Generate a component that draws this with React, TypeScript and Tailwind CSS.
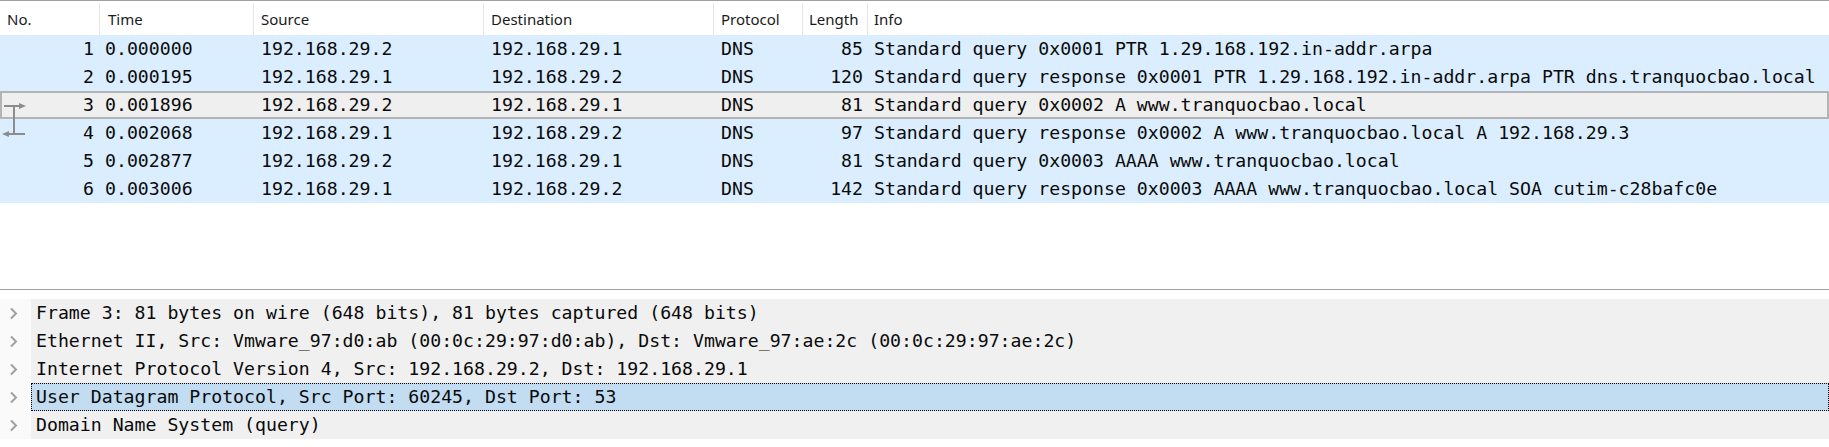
import React from "react";

const mono = "font-['DejaVu_Sans_Mono','Liberation_Mono',monospace] text-[18.2px]";

type Pkt = { no: number; time: string; src: string; dst: string; proto: string; len: number; info: string };

const packets: Pkt[] = [
  { no: 1, time: "0.000000", src: "192.168.29.2", dst: "192.168.29.1", proto: "DNS", len: 85, info: "Standard query 0x0001 PTR 1.29.168.192.in-addr.arpa" },
  { no: 2, time: "0.000195", src: "192.168.29.1", dst: "192.168.29.2", proto: "DNS", len: 120, info: "Standard query response 0x0001 PTR 1.29.168.192.in-addr.arpa PTR dns.tranquocbao.local" },
  { no: 3, time: "0.001896", src: "192.168.29.2", dst: "192.168.29.1", proto: "DNS", len: 81, info: "Standard query 0x0002 A www.tranquocbao.local" },
  { no: 4, time: "0.002068", src: "192.168.29.1", dst: "192.168.29.2", proto: "DNS", len: 97, info: "Standard query response 0x0002 A www.tranquocbao.local A 192.168.29.3" },
  { no: 5, time: "0.002877", src: "192.168.29.2", dst: "192.168.29.1", proto: "DNS", len: 81, info: "Standard query 0x0003 AAAA www.tranquocbao.local" },
  { no: 6, time: "0.003006", src: "192.168.29.1", dst: "192.168.29.2", proto: "DNS", len: 142, info: "Standard query response 0x0003 AAAA www.tranquocbao.local SOA cutim-c28bafc0e" },
];

const details = [
  "Frame 3: 81 bytes on wire (648 bits), 81 bytes captured (648 bits)",
  "Ethernet II, Src: Vmware_97:d0:ab (00:0c:29:97:d0:ab), Dst: Vmware_97:ae:2c (00:0c:29:97:ae:2c)",
  "Internet Protocol Version 4, Src: 192.168.29.2, Dst: 192.168.29.1",
  "User Datagram Protocol, Src Port: 60245, Dst Port: 53",
  "Domain Name System (query)",
];

function Chevron() {
  return (
    <svg width="9" height="13" viewBox="0 0 9 13" className="shrink-0">
      <polyline points="2,1.5 7,6.5 2,11.5" fill="none" stroke="#a0a0a0" strokeWidth="2" />
    </svg>
  );
}

export default function App() {
  return (
    <div className="w-[1829px] h-[447px] bg-white flex flex-col overflow-hidden text-[#111]">
      {/* Packet list */}
      <div className="relative h-[289px] shrink-0 border-t border-[#a0a0a0] bg-white">
        <div className="flex h-[34px] pt-[2px] font-['Noto_Sans',sans-serif] text-[15px] text-[#1a1a1a]">
          <div className="w-[100px] border-r border-[#e5e5e5] pl-[7px] flex items-center">No.</div>
          <div className="w-[154px] border-r border-[#e5e5e5] pl-[8px] flex items-center">Time</div>
          <div className="w-[230px] border-r border-[#e5e5e5] pl-[7px] flex items-center">Source</div>
          <div className="w-[230px] border-r border-[#e5e5e5] pl-[7px] flex items-center">Destination</div>
          <div className="w-[89px] border-r border-[#e5e5e5] pl-[7px] flex items-center">Protocol</div>
          <div className="w-[65px] border-r border-[#e5e5e5] pl-[6px] flex items-center">Length</div>
          <div className="flex-1 pl-[6px] flex items-center">Info</div>
        </div>
        <div className={`${mono} text-[#0a0a0a]`}>
          {packets.map((p) => {
            const sel = p.no === 3;
            return (
              <div
                key={p.no}
                className={`flex h-[28px] items-center whitespace-nowrap ${
                  sel ? "bg-[#efefef] border-2 border-[#b4b4b4]" : "bg-[#daeeff]"
                }`}
              >
                <div className={`${sel ? "w-[98px]" : "w-[100px]"} pr-[6px] text-right`}>{p.no}</div>
                <div className="w-[154px] pl-[5px]">{p.time}</div>
                <div className="w-[230px] pl-[7px]">{p.src}</div>
                <div className="w-[230px] pl-[7px]">{p.dst}</div>
                <div className="w-[89px] pl-[7px]">{p.proto}</div>
                <div className="w-[65px] pr-[5px] text-right">{p.len}</div>
                <div className="flex-1 pl-[6px]">{p.info}</div>
              </div>
            );
          })}
        </div>
        {/* related packet indicator */}
        <svg className="absolute left-0 top-[98px]" width="30" height="44" viewBox="0 0 30 44">
          <g stroke="#8c8c8c" strokeWidth="2" fill="none">
            <line x1="4" y1="7" x2="20" y2="7" />
            <line x1="14" y1="7" x2="14" y2="35" />
            <line x1="7" y1="35" x2="25" y2="35" />
          </g>
          <polygon points="19,4 26,7 19,10" fill="#8c8c8c" />
          <polygon points="9,32 2,35 9,38" fill="#8c8c8c" />
        </svg>
      </div>

      {/* Packet details */}
      <div className="flex-1 border-t border-[#a0a0a0] bg-white pt-[9px]">
        <div className={`${mono} text-[#0a0a0a]`}>
          {details.map((d, i) => {
            const sel = i === 3;
            return (
              <div key={i} className="flex h-[28px] items-stretch whitespace-nowrap">
                <div className="w-[31px] flex items-center pl-[9px] bg-[#fafafa]">
                  <Chevron />
                </div>
                <div
                  className={`flex-1 flex items-center ${
                    sel ? "bg-[#c2dcf2] border border-dotted border-black pl-[4px]" : "bg-[#f0f0f0] pl-[5px]"
                  }`}
                >
                  {d}
                </div>
              </div>
            );
          })}
        </div>
      </div>
    </div>
  );
}
